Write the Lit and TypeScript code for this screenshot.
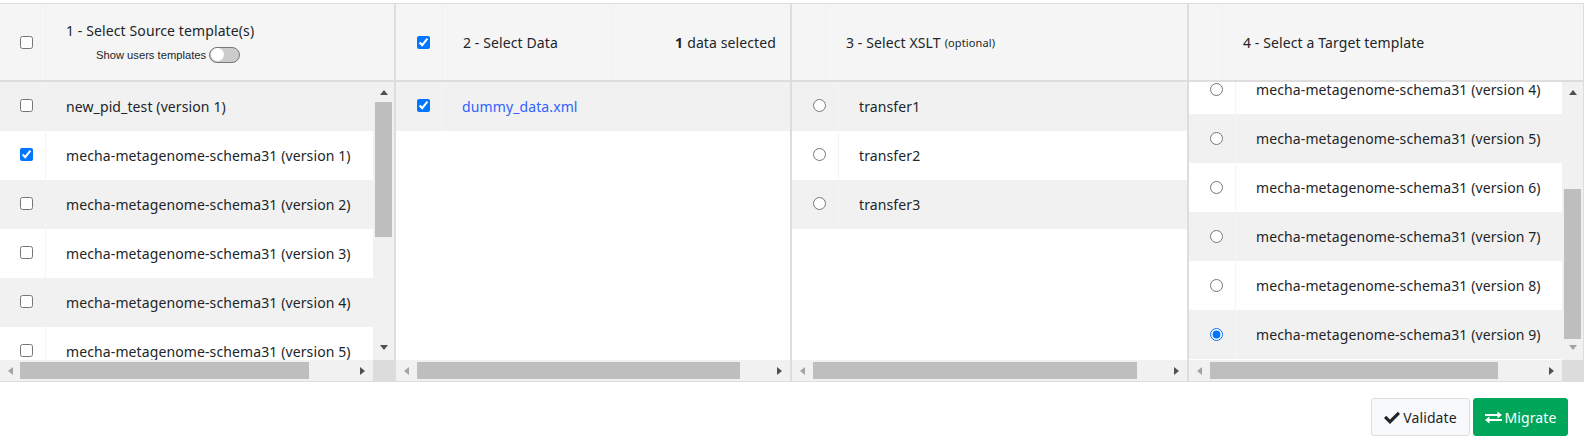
import { LitElement, css, html, nothing } from "lit";
import { customElement } from "lit/decorators.js";

interface Row {
  label: string;
  checked?: boolean;
  link?: boolean;
}

interface Column {
  kind: "checkbox" | "radio";
  width: number;
  rows: Row[];
  scrollTop?: number;
  hThumb: number;
  vThumb?: { top: number; height: number };
}

const versions = (from: number, to: number, pick: number): Row[] => {
  const rows: Row[] = [];
  for (let v = from; v <= to; v++) {
    rows.push({ label: `mecha-metagenome-schema31 (version ${v})`, checked: v === pick });
  }
  return rows;
};

const columns: Column[] = [
  {
    kind: "checkbox",
    width: 396,
    rows: [{ label: "new_pid_test (version 1)" }, ...versions(1, 5, 1)],
    hThumb: 289,
    vThumb: { top: 20, height: 135 },
  },
  {
    kind: "checkbox",
    width: 396,
    rows: [{ label: "dummy_data.xml", checked: true, link: true }],
    hThumb: 323,
  },
  {
    kind: "radio",
    width: 397,
    rows: [{ label: "transfer1" }, { label: "transfer2" }, { label: "transfer3" }],
    hThumb: 324,
  },
  {
    kind: "radio",
    width: 395,
    rows: versions(4, 9, 9),
    scrollTop: -17,
    hThumb: 288,
    vThumb: { top: 107, height: 150 },
  },
];

@customElement("app-root")
export class AppRoot extends LitElement {
  static styles = css`
    :host {
      display: block;
      width: 1596px;
      height: 447px;
      padding-top: 3px;
      box-sizing: border-box;
      background: #fff;
      font-family: "Noto Sans", sans-serif;
      font-size: 14px;
      letter-spacing: 0.11px;
      color: #212529;
    }
    input {
      margin: 0;
      width: 13px;
      height: 13px;
      display: block;
    }
    .table {
      display: flex;
      width: 1584px;
      border-top: 1px solid #ddd;
      border-bottom: 1px solid #ddd;
    }
    .col {
      display: flex;
      flex-direction: column;
      box-sizing: border-box;
      border-right: 2px solid #ddd;
    }
    .col:last-child {
      border-right-width: 1px;
    }
    .head {
      display: flex;
      height: 78px;
      box-sizing: border-box;
      border-bottom: 2px solid #ddd;
      background: #f5f5f5;
    }
    .head-check {
      flex: none;
      box-sizing: border-box;
      display: flex;
      align-items: center;
      padding-left: 21px;
      border-right: 1px solid #f1f1f1;
    }
    .col:first-child .head-check,
    .col:first-child .row-check {
      padding-left: 20px;
    }
    .head-title {
      flex: 1;
      display: flex;
      align-items: center;
      padding: 0 20px;
    }
    .head-title small {
      font-size: 11px;
      margin-left: 4px;
    }
    .source-title {
      display: flex;
      flex-direction: column;
      gap: 7px;
      margin-top: -1px;
    }
    .users {
      display: flex;
      align-items: center;
      gap: 3px;
      padding-left: 30px;
      font-family: "Liberation Sans", sans-serif;
      font-size: 11.2px;
      letter-spacing: 0;
    }
    .toggle {
      width: 28px;
      height: 14px;
      border: 1px solid #777;
      border-radius: 8px;
      background: #ccc;
      display: flex;
      align-items: center;
      padding-left: 1px;
    }
    .toggle i {
      width: 13px;
      height: 13px;
      border-radius: 50%;
      background: #fff;
    }
    .count {
      flex: none;
      width: 178px;
      display: flex;
      align-items: center;
      justify-content: flex-end;
      gap: 4px;
      padding-right: 14px;
      box-sizing: border-box;
      border-left: 1px solid #f1f1f1;
    }
    .body {
      display: flex;
      height: 278px;
    }
    .list {
      flex: 1;
      min-width: 0;
      overflow: hidden;
    }
    .row {
      display: flex;
      height: 49px;
    }
    .row:nth-child(odd) {
      background: #f1f1f1;
    }
    .flip .row:nth-child(odd) {
      background: transparent;
    }
    .flip .row:nth-child(even) {
      background: #f1f1f1;
    }
    .row-check {
      flex: none;
      box-sizing: border-box;
      display: flex;
      align-items: center;
      padding: 0 0 2px 21px;
      border-right: 1px solid #f4f4f4;
    }
    .flip .row-check {
      padding-bottom: 0;
    }
    .row-label {
      display: flex;
      align-items: center;
      padding-left: 20px;
      white-space: nowrap;
      line-height: 14px;
    }
    .row-label a {
      color: #2f62ff;
      text-decoration: none;
    }
    .vbar {
      flex: none;
      width: 21px;
      display: flex;
      flex-direction: column;
      align-items: center;
      padding-bottom: 2px;
      box-sizing: border-box;
      background: #f1f1f1;
    }
    .vtrack {
      flex: 1;
      min-height: 0;
      align-self: stretch;
      display: flex;
      flex-direction: column;
      align-items: center;
    }
    .vthumb {
      width: 17px;
      flex: none;
      background: #bebebe;
    }
    .hrow {
      display: flex;
      height: 21px;
    }
    .hbar {
      flex: 1;
      display: flex;
      align-items: center;
      background: #f1f1f1;
    }
    .hthumb {
      height: 17px;
      flex: none;
      background: #bebebe;
    }
    .htrack {
      flex: 1;
      display: flex;
      align-items: center;
    }
    .corner {
      flex: none;
      width: 21px;
      background: #dcdcdc;
    }
    .arrow {
      flex: none;
      width: 21px;
      height: 21px;
      display: flex;
      align-items: center;
      justify-content: center;
    }
    .col:first-child .left {
      width: 20px;
    }
    .arrow i {
      width: 0;
      height: 0;
      border-style: solid;
      border-color: transparent;
    }
    .left i {
      border-width: 4px 5px 4px 0;
      border-right-color: #a3a3a3;
    }
    .right i {
      border-width: 4px 0 4px 5px;
      border-left-color: #505050;
    }
    .up i {
      border-width: 0 4px 5px;
      border-bottom-color: #505050;
    }
    .down i {
      border-width: 5px 4px 0;
      border-top-color: #505050;
    }
    .down.off i {
      border-top-color: #a3a3a3;
    }
    .actions {
      display: flex;
      justify-content: flex-end;
      gap: 3px;
      width: 1568px;
      padding-top: 16px;
    }
    .btn {
      height: 38px;
      box-sizing: border-box;
      display: flex;
      align-items: center;
      justify-content: center;
      gap: 3px;
      border-radius: 3px;
      border: 1px solid #ddd;
      background: #f8f9fa;
      font: inherit;
      letter-spacing: inherit;
      color: #212529;
      padding: 0;
    }
    .validate {
      width: 99px;
    }
    .migrate {
      width: 95px;
      background: #00a65a;
      border-color: #00a65a;
      color: #fff;
    }
    svg {
      display: block;
      fill: currentColor;
    }
  `;

  private arrow(dir: string) {
    return html`<span class="arrow ${dir}"><i></i></span>`;
  }

  private renderHead(index: number) {
    if (index === 0) {
      return html`
        <div class="head-check" style="width:46px"><input type="checkbox" /></div>
        <div class="head-title">
          <div class="source-title">
            <span>1 - Select Source template(s)</span>
            <span class="users">Show users templates <span class="toggle"><i></i></span></span>
          </div>
        </div>
      `;
    }
    if (index === 1) {
      return html`
        <div class="head-check" style="width:47px"><input type="checkbox" checked /></div>
        <div class="head-title">2 - Select Data</div>
        <div class="count"><b>1</b> data selected</div>
      `;
    }
    if (index === 2) {
      return html`
        <div class="head-check" style="width:34px"></div>
        <div class="head-title">3 - Select XSLT <small>(optional)</small></div>
      `;
    }
    return html`
      <div class="head-check" style="width:34px"></div>
      <div class="head-title">4 - Select a Target template</div>
    `;
  }

  private renderRow(col: Column, row: Row) {
    const cellWidth = col.kind === "radio" ? 47 : 46;
    return html`
      <div class="row">
        <div class="row-check" style="width:${cellWidth}px">
          <input
            type=${col.kind}
            name=${col.kind === "radio" ? `r${col.width}` : nothing}
            ?checked=${row.checked}
          />
        </div>
        <div class="row-label">
          ${row.link ? html`<a href="#">${row.label}</a>` : row.label}
        </div>
      </div>
    `;
  }

  private renderCol(col: Column, index: number) {
    const v = col.vThumb;
    return html`
      <div class="col" style="width:${col.width}px">
        <div class="head">${this.renderHead(index)}</div>
        <div class="body">
          <div class="list">
            <div class=${col.scrollTop ? "flip" : ""} style="margin-top:${col.scrollTop ?? 0}px">
              ${col.rows.map((r) => this.renderRow(col, r))}
            </div>
          </div>
          ${v
            ? html`<div class="vbar">
                ${this.arrow("up")}
                <div class="vtrack">
                  <div class="vthumb" style="margin-top:${v.top - 21}px;height:${v.height}px"></div>
                </div>
                ${this.arrow(index === 3 ? "down off" : "down")}
              </div>`
            : nothing}
        </div>
        <div class="hrow">
          <div class="hbar">
            ${this.arrow("left")}
            <div class="htrack">
              <div class="hthumb" style="width:${col.hThumb}px"></div>
            </div>
            ${this.arrow("right")}
          </div>
          ${v ? html`<div class="corner"></div>` : nothing}
        </div>
      </div>
    `;
  }

  render() {
    return html`
      <div class="table">${columns.map((c, i) => this.renderCol(c, i))}</div>
      <div class="actions">
        <button class="btn validate">
          <svg width="16" height="13" viewBox="0 0 16 13"><path d="M6 13 0 7l2.2-2.2L6 8.6 13.8 0.8 16 3z" /></svg>
          Validate
        </button>
        <button class="btn migrate">
          <svg width="17" height="13" viewBox="0 0 17 13">
            <path d="M0 3h12.5V0.5L17 4l-4.500 3.500V5H0zM17 8H4.500V5.500L0 9l4.500 3.500V10H17z" />
          </svg>
          Migrate
        </button>
      </div>
    `;
  }
}
